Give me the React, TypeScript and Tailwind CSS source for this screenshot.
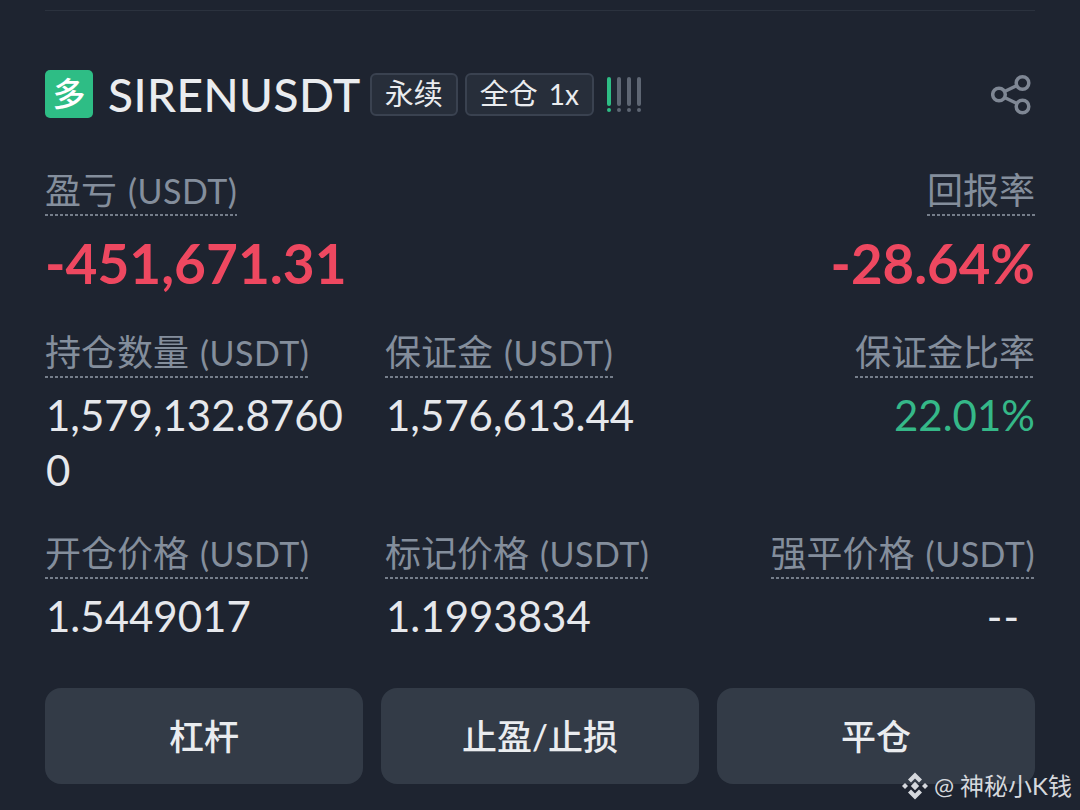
const font = { fontFamily: '"Lato", "Noto Sans CJK SC", sans-serif' };

function Label({ text, unit, right }: { text: string; unit?: string; right?: boolean }) {
  return (
    <div className={right ? "flex justify-end" : "flex"}>
      <div className="flex flex-col">
        <div className="h-[49px] whitespace-nowrap text-[36px] leading-[50px] text-[#848e9c]">
          {text}
          {unit ? <span className="ml-[11px] text-[34px] tracking-[0.5px]">{unit}</span> : null}
        </div>
        <div className="h-[2px] bg-[repeating-linear-gradient(90deg,#757d8a_0_3px,transparent_3px_5px)]" />
      </div>
    </div>
  );
}

function Cell({ text, unit, value, right, color, width, extra }: { text: string; unit?: string; value: string; right?: boolean; color?: string; width: string; extra?: string }) {
  return (
    <div className={width}>
      <Label text={text} unit={unit} right={right} />
      <div className={`mt-[10px] text-[42px] leading-[55px] break-all ${right ? "text-right" : "pl-[1px]"} ${color ?? "text-[#e6e8ec]"} ${extra ?? ""}`}>{value}</div>
    </div>
  );
}

function Share() {
  return (
    <svg width="42" height="42" viewBox="0 0 42 42" fill="none" stroke="#7f8794" strokeWidth="3.5">
      <circle cx="31.5" cy="10" r="6.3" />
      <circle cx="8" cy="21.5" r="6.3" />
      <circle cx="31.5" cy="33.5" r="6.3" />
      <path d="M13.5 18.5 26 12.5M13.5 24.5 26 30.5" />
    </svg>
  );
}

function BinanceLogo() {
  return (
    <svg width="28" height="28" viewBox="0 0 28 28" fill="#d5d8dd">
      <path d="M14 0.5 21 7.5 18 10.5 14 6.5 10 10.5 7 7.5Z" />
      <path d="M14 27.5 21 20.5 18 17.5 14 21.5 10 17.5 7 20.5Z" />
      <path d="M14 9.8 18.2 14 14 18.2 9.8 14Z" />
      <path d="M4 11 7 14 4 17 1 14Z" />
      <path d="M24 11 27 14 24 17 21 14Z" />
    </svg>
  );
}

function Tag({ children }: { children: React.ReactNode }) {
  return (
    <span className="flex h-[43px] items-center rounded-[6px] border-2 border-[#3a4250] bg-[#272e3a] px-[13px] text-[29px] text-[#eaecef] whitespace-nowrap">
      {children}
    </span>
  );
}

function Btn({ children }: { children: React.ReactNode }) {
  return (
    <div className="flex h-[96px] flex-1 items-center justify-center rounded-[16px] bg-[#333b47] text-[35px] font-medium text-[#eaecef]">
      {children}
    </div>
  );
}

export default function App() {
  return (
    <div style={font} className="relative flex h-[810px] w-[1080px] flex-col overflow-hidden bg-[#1e2430] px-[45px] pt-[10px]">
      <div className="h-[1px] bg-[#2b323e]" />
      <div className="mt-[59px] flex h-[48px] items-center">
        <div className="flex h-[48px] w-[48px] items-center justify-center rounded-[5px] bg-[#2ebd85] text-[33px] font-medium text-white">多</div>
        <div className="ml-[15px] text-[46px] font-medium tracking-[0.45px] text-[#eaecef]">SIRENUSDT</div>
        <div className="ml-[9px] flex gap-[7px]">
          <Tag>永续</Tag>
          <Tag>全仓<span className="ml-[11px] text-[28px]">1x</span></Tag>
        </div>
        <div className="ml-[13px] flex gap-[6px]">
          {[0, 1, 2, 3].map((i) => (
            <div key={i} className="flex h-[35px] w-[4px] flex-col justify-between">
              <div className={`h-[29px] rounded-full ${i === 0 ? "bg-[#2ebd85]" : "bg-[#5e6673]"}`} />
              <div className={`h-[4px] rounded-full ${i === 0 ? "bg-[#2ebd85]" : "bg-[#5e6673]"}`} />
            </div>
          ))}
        </div>
        <div className="ml-auto mr-[2px] -mt-[1px]"><Share /></div>
      </div>

      <div className="mt-[47px] flex justify-between">
        <div>
          <Label text="盈亏" unit="(USDT)" />
          <div className="text-[55px] font-bold leading-[94px] text-[#ee4860]">-451,671.31</div>
        </div>
        <div>
          <Label text="回报率" right />
          <div className="text-[54.5px] font-bold leading-[94px] text-[#ee4860]">-28.64%</div>
        </div>
      </div>

      <div className="mt-[17px] flex">
        <Cell width="w-[340px] pr-[30px]" text="持仓数量" unit="(USDT)" value="1,579,132.87600" />
        <Cell width="w-[300px]" text="保证金" unit="(USDT)" value="1,576,613.44" />
        <Cell width="flex-1" text="保证金比率" value="22.01%" right color="text-[#35b888]" />
      </div>

      <div className="mt-[30px] flex">
        <Cell width="w-[340px]" text="开仓价格" unit="(USDT)" value="1.5449017" />
        <Cell width="w-[300px]" text="标记价格" unit="(USDT)" value="1.1993834" />
        <Cell width="flex-1" text="强平价格" unit="(USDT)" value="--" right extra="pr-[15px] tracking-[1px]" />
      </div>

      <div className="mt-[44px] flex gap-[18px]">
        <Btn>杠杆</Btn>
        <Btn>止盈/止损</Btn>
        <Btn>平仓</Btn>
      </div>

      <div className="absolute right-[8px] top-[768px] flex items-center gap-[5px] text-[24px] text-[#d5d8dd]">
        <BinanceLogo />
        <span>@ 神秘小K钱</span>
      </div>
    </div>
  );
}
